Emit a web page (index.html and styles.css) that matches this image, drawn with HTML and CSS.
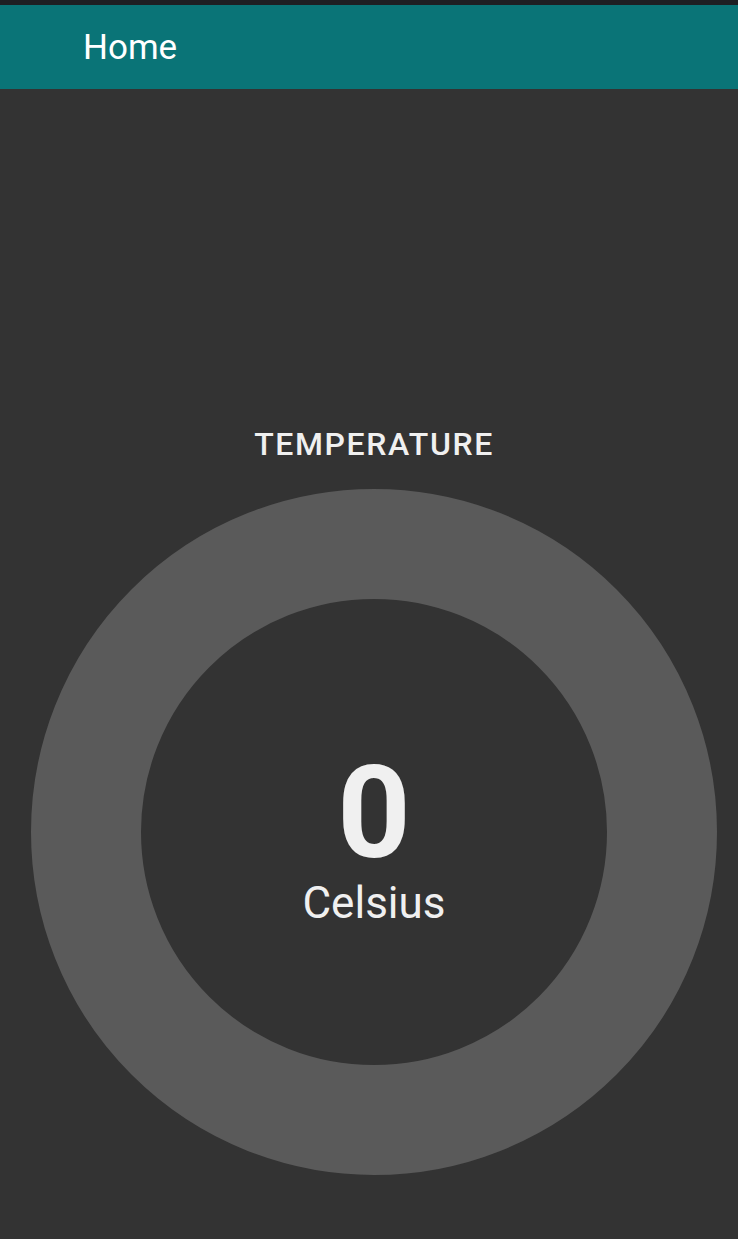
FILE: index.html
```html
<!DOCTYPE html>
<html>
<head>
<meta charset="utf-8">
<link rel="stylesheet" href="styles.css">
</head>
<body>
<div class="status"></div>
<header class="appbar"><span class="title">Home</span></header>
<main class="content">
  <h2 class="label">TEMPERATURE</h2>
  <div class="gauge">
    <div class="value">0</div>
    <div class="unit">Celsius</div>
  </div>
</main>
</body>
</html>
```

FILE: styles.css
```css
html, body {
  margin: 0;
  padding: 0;
  background: #333333;
  font-family: Roboto, "Noto Sans", sans-serif;
  height: 100%;
}
.status {
  height: 5px;
  background: #1e1f23;
}
.appbar {
  height: 84px;
  background: #0a7477;
  display: flex;
  align-items: center;
  padding-left: 83px;
}
.title {
  color: #ffffff;
  font-size: 35px;
  font-weight: 400;
  line-height: 1;
}
.content {
  display: flex;
  flex-direction: column;
  align-items: center;
  padding-left: 10px;
  padding-top: 336px;
}
.label {
  margin: 0;
  color: #f0f0f0;
  font-size: 32px;
  font-weight: 500;
  letter-spacing: 1.6px;
  line-height: 38px;
}
.gauge {
  box-sizing: border-box;
  margin-top: 26px;
  width: 686px;
  height: 686px;
  padding-top: 14px;
  border: 110px solid #5a5a5a;
  border-radius: 50%;
  background: #333333;
  display: flex;
  flex-direction: column;
  align-items: center;
  justify-content: center;
  color: #f0f0f0;
}
.value {
  font-size: 128px;
  font-weight: 700;
  line-height: 128px;
}
.unit {
  font-size: 44px;
  font-weight: 400;
  line-height: 52px;
}
```
